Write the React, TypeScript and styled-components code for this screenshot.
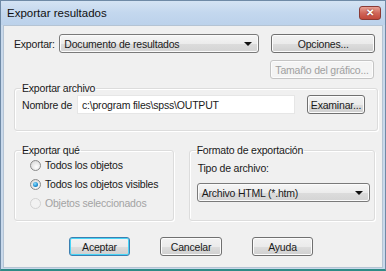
import styled, { createGlobalStyle } from "styled-components";

const Global = createGlobalStyle`
  html, body {
    margin: 0;
    padding: 0;
    background: #ffffff;
  }
  * {
    box-sizing: border-box;
  }
`;

const Window = styled.div`
  width: 386px;
  height: 271px;
  display: flex;
  flex-direction: column;
  background: #c9d9eb;
  border: 1px solid #6f8aa6;
  border-bottom: 2px solid #2f8a86;
  font-family: "Liberation Sans", Arial, sans-serif;
  font-size: 10.5px;
  letter-spacing: -0.2px;
  color: #1a1a1a;
  overflow: hidden;
`;

const TitleBar = styled.div`
  height: 24px;
  flex: none;
  display: flex;
  align-items: center;
  justify-content: space-between;
  padding: 0 4px 0 6px;
  background: linear-gradient(180deg, #d4e3f3 0%, #c3d7ee 50%, #bcd2eb 100%);
`;

const Title = styled.span`
  font-size: 11.5px;
  letter-spacing: 0;
  color: #101010;
`;

const CloseButton = styled.div`
  width: 22px;
  height: 14px;
  margin-top: -1px;
  border: 1px solid #8a3b36;
  border-radius: 3px;
  background: linear-gradient(180deg, #e8a296 0%, #d0675a 50%, #c2483a 100%);
  display: flex;
  align-items: center;
  justify-content: center;
  color: #ffffff;
  font-weight: bold;
  font-size: 10px;
  text-shadow: 0 0 2px #6a1f18;
`;

const Client = styled.div`
  flex: 1;
  margin: 0 2px 1px 2px;
  background: #f0f0f0;
  border: 1px solid #b5c4d4;
  padding: 8px 7px 0 10px;
  display: flex;
  flex-direction: column;
`;

const Row = styled.div`
  display: flex;
  align-items: center;
`;

const Label = styled.span<{ $disabled?: boolean }>`
  color: ${({ $disabled }) => ($disabled ? "#a3a3a3" : "#1a1a1a")};
  white-space: nowrap;
`;

const Combo = styled.div<{ $width: number }>`
  width: ${({ $width }) => $width}px;
  height: 19px;
  border: 1px solid #7a7a7a;
  border-radius: 3px;
  background: linear-gradient(180deg, #f6f6f6 0%, #ececec 50%, #dcdcdc 52%, #d4d4d4 100%);
  display: flex;
  align-items: center;
  justify-content: space-between;
  padding: 0 6px 0 4px;
  box-shadow: inset 0 0 0 1px #fbfbfb;
`;

const Arrow = styled.span`
  width: 0;
  height: 0;
  border-left: 4px solid transparent;
  border-right: 4px solid transparent;
  border-top: 4px solid #111111;
`;

const Button = styled.div<{ $width: number; $disabled?: boolean; $default?: boolean }>`
  width: ${({ $width }) => $width}px;
  height: 19px;
  border: 1px solid
    ${({ $disabled, $default }) =>
      $disabled ? "#c4c4c4" : $default ? "#3c7fb1" : "#707070"};
  border-radius: 3px;
  background: ${({ $disabled }) =>
    $disabled
      ? "#f4f4f4"
      : "linear-gradient(180deg, #f2f2f2 0%, #ebebeb 50%, #dddddd 52%, #cfcfcf 100%)"};
  box-shadow: ${({ $default }) =>
    $default ? "inset 0 0 0 1px #48d4f6" : "inset 0 0 0 1px #fcfcfc"};
  display: flex;
  align-items: center;
  justify-content: center;
  color: ${({ $disabled }) => ($disabled ? "#a0a0a0" : "#1a1a1a")};
  white-space: nowrap;
`;

const Group = styled.fieldset<{ $width: number; $height: number }>`
  width: ${({ $width }) => $width}px;
  height: ${({ $height }) => $height}px;
  margin: 0;
  border: 1px solid #dcdcdc;
  box-shadow: inset 1px 1px 0 #ffffff, 1px 1px 0 #ffffff;
  border-radius: 3px;
  padding: 0 7px 0 7px;
  min-width: 0;
`;

const Legend = styled.legend`
  padding: 0 1px;
  margin-left: -1px;
  color: #1a1a1a;
`;

const TextInput = styled.div`
  width: 218px;
  height: 19px;
  background: #ffffff;
  border: 1px solid #e6e6e6;
  display: flex;
  align-items: center;
  padding-left: 4px;
`;

const RadioList = styled.div`
  display: flex;
  flex-direction: column;
  gap: 5px;
  padding: 2px 0 0 8px;
`;

const RadioRow = styled.div`
  display: flex;
  align-items: center;
  gap: 4px;
  height: 14px;
`;

const RadioCircle = styled.span<{ $checked?: boolean; $disabled?: boolean }>`
  width: 11px;
  height: 11px;
  border-radius: 50%;
  border: 1px solid ${({ $disabled }) => ($disabled ? "#d2d2d2" : "#8a8a8a")};
  background: ${({ $disabled }) =>
    $disabled
      ? "#f2f2f2"
      : "radial-gradient(circle at 60% 65%, #ffffff 0%, #e6e6e6 55%, #cfcfcf 100%)"};
  display: flex;
  align-items: center;
  justify-content: center;
  &::after {
    content: "";
    display: ${({ $checked }) => ($checked ? "block" : "none")};
    width: 5px;
    height: 5px;
    border-radius: 50%;
    background: radial-gradient(circle at 40% 35%, #8ee0ff 0%, #1c8ccf 60%, #0d4f8a 100%);
  }
`;

const Footer = styled.div`
  display: flex;
  gap: 30px;
  padding: 16px 0 0 55px;
`;

export default function App() {
  return (
    <>
      <Global />
      <Window>
        <TitleBar>
          <Title>Exportar resultados</Title>
          <CloseButton>✕</CloseButton>
        </TitleBar>
        <Client>
          <Row>
            <Label style={{ width: 46 }}>Exportar:</Label>
            <Combo $width={202}>
              <span>Documento de resultados</span>
              <Arrow />
            </Combo>
            <div style={{ width: 13 }} />
            <Button $width={105}>Opciones...</Button>
          </Row>
          <Row style={{ justifyContent: "flex-end", marginTop: 7, paddingRight: 1 }}>
            <Button $width={104} $disabled>
              Tamaño del gráfico...
            </Button>
          </Row>
          <div style={{ height: 3 }} />
          <Group $width={364} $height={49}>
            <Legend>Exportar archivo</Legend>
            <Row style={{ marginTop: 1 }}>
              <Label style={{ width: 55 }}>Nombre de</Label>
              <TextInput>c:\program files\spss\OUTPUT</TextInput>
              <div style={{ width: 12 }} />
              <Button $width={58}>Examinar...</Button>
            </Row>
          </Group>
          <Row style={{ marginTop: 13, alignItems: "flex-start", gap: 15 }}>
            <Group $width={161} $height={77}>
              <Legend>Exportar qué</Legend>
              <RadioList>
                <RadioRow>
                  <RadioCircle />
                  <Label>Todos los objetos</Label>
                </RadioRow>
                <RadioRow>
                  <RadioCircle $checked />
                  <Label>Todos los objetos visibles</Label>
                </RadioRow>
                <RadioRow>
                  <RadioCircle $disabled />
                  <Label $disabled>Objetos seleccionados</Label>
                </RadioRow>
              </RadioList>
            </Group>
            <Group $width={188} $height={77}>
              <Legend>Formato de exportación</Legend>
              <div style={{ padding: "6px 0 9px 1px" }}>
                <Label>Tipo de archivo:</Label>
              </div>
              <Combo $width={173}>
                <span>Archivo HTML (*.htm)</span>
                <Arrow />
              </Combo>
            </Group>
          </Row>
          <Footer>
            <Button $width={61} $default>
              Aceptar
            </Button>
            <Button $width={62}>Cancelar</Button>
            <Button $width={61}>Ayuda</Button>
          </Footer>
        </Client>
      </Window>
    </>
  );
}
